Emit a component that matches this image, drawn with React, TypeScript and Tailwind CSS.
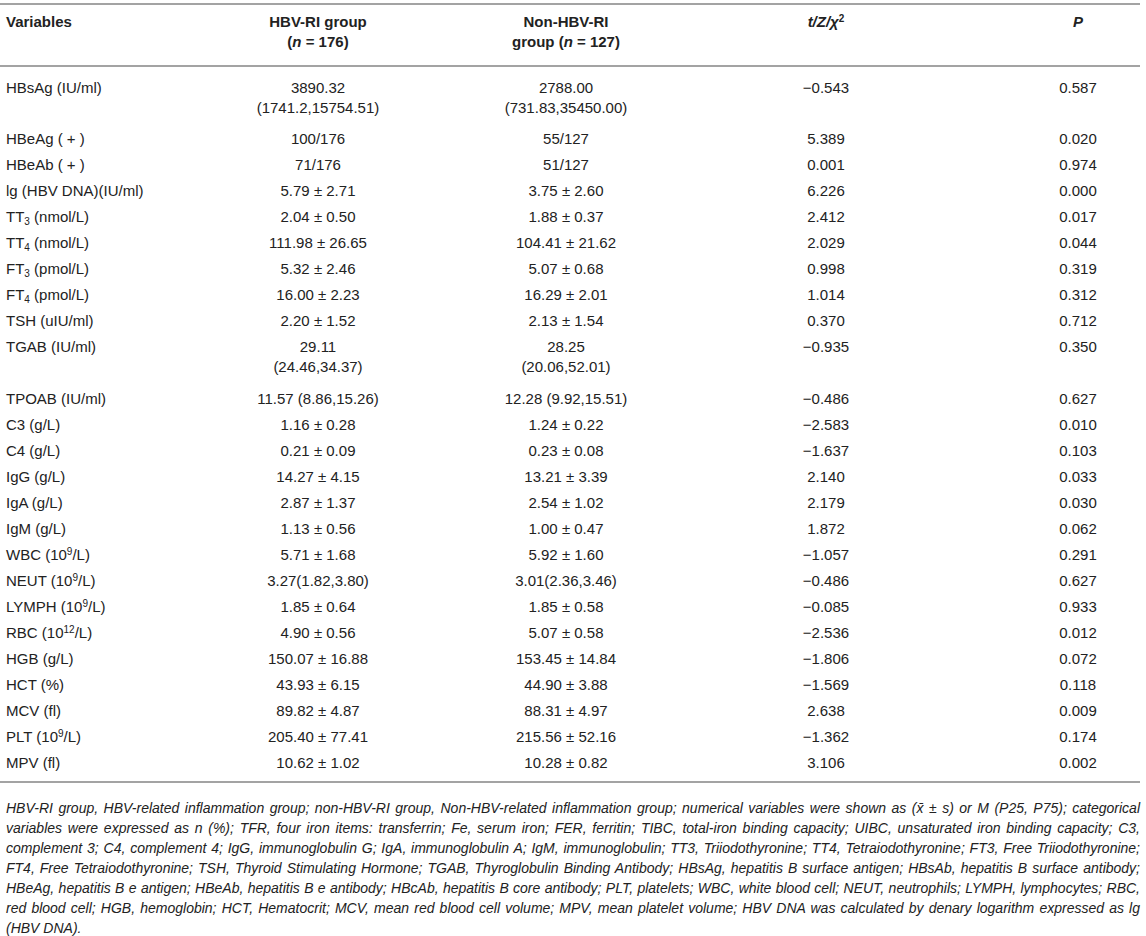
import React from 'react';

type Row = {
  label: React.ReactNode;
  hbv: React.ReactNode;
  non: React.ReactNode;
  stat: string;
  p: string;
  pad?: string;
};

const pm = (a: string, b: string) => `${a} ± ${b}`;

const rows: Row[] = [
  {
    label: 'HBsAg (IU/ml)',
    hbv: <>3890.32<br />(1741.2,15754.51)</>,
    non: <>2788.00<br />(731.83,35450.00)</>,
    stat: '−0.543',
    p: '0.587',
    pad: 'pt-[11px] pb-[8px]'
  },
  { label: 'HBeAg ( + )', hbv: '100/176', non: '55/127', stat: '5.389', p: '0.020' },
  { label: 'HBeAb ( + )', hbv: '71/176', non: '51/127', stat: '0.001', p: '0.974' },
  { label: 'lg (HBV DNA)(IU/ml)', hbv: pm('5.79', '2.71'), non: pm('3.75', '2.60'), stat: '6.226', p: '0.000' },
  { label: <>TT<sub className="text-[10px]">3</sub> (nmol/L)</>, hbv: pm('2.04', '0.50'), non: pm('1.88', '0.37'), stat: '2.412', p: '0.017' },
  { label: <>TT<sub className="text-[10px]">4</sub> (nmol/L)</>, hbv: pm('111.98', '26.65'), non: pm('104.41', '21.62'), stat: '2.029', p: '0.044' },
  { label: <>FT<sub className="text-[10px]">3</sub> (pmol/L)</>, hbv: pm('5.32', '2.46'), non: pm('5.07', '0.68'), stat: '0.998', p: '0.319' },
  { label: <>FT<sub className="text-[10px]">4</sub> (pmol/L)</>, hbv: pm('16.00', '2.23'), non: pm('16.29', '2.01'), stat: '1.014', p: '0.312' },
  { label: 'TSH (uIU/ml)', hbv: pm('2.20', '1.52'), non: pm('2.13', '1.54'), stat: '0.370', p: '0.712' },
  {
    label: 'TGAB (IU/ml)',
    hbv: <>29.11<br />(24.46,34.37)</>,
    non: <>28.25<br />(20.06,52.01)</>,
    stat: '−0.935',
    p: '0.350',
    pad: 'pt-[3px] pb-[9px]'
  },
  { label: 'TPOAB (IU/ml)', hbv: '11.57 (8.86,15.26)', non: '12.28 (9.92,15.51)', stat: '−0.486', p: '0.627' },
  { label: 'C3 (g/L)', hbv: pm('1.16', '0.28'), non: pm('1.24', '0.22'), stat: '−2.583', p: '0.010' },
  { label: 'C4 (g/L)', hbv: pm('0.21', '0.09'), non: pm('0.23', '0.08'), stat: '−1.637', p: '0.103' },
  { label: 'IgG (g/L)', hbv: pm('14.27', '4.15'), non: pm('13.21', '3.39'), stat: '2.140', p: '0.033' },
  { label: 'IgA (g/L)', hbv: pm('2.87', '1.37'), non: pm('2.54', '1.02'), stat: '2.179', p: '0.030' },
  { label: 'IgM (g/L)', hbv: pm('1.13', '0.56'), non: pm('1.00', '0.47'), stat: '1.872', p: '0.062' },
  { label: <>WBC (10<sup className="text-[10px]">9</sup>/L)</>, hbv: pm('5.71', '1.68'), non: pm('5.92', '1.60'), stat: '−1.057', p: '0.291' },
  { label: <>NEUT (10<sup className="text-[10px]">9</sup>/L)</>, hbv: '3.27(1.82,3.80)', non: '3.01(2.36,3.46)', stat: '−0.486', p: '0.627' },
  { label: <>LYMPH (10<sup className="text-[10px]">9</sup>/L)</>, hbv: pm('1.85', '0.64'), non: pm('1.85', '0.58'), stat: '−0.085', p: '0.933' },
  { label: <>RBC (10<sup className="text-[10px]">12</sup>/L)</>, hbv: pm('4.90', '0.56'), non: pm('5.07', '0.58'), stat: '−2.536', p: '0.012' },
  { label: 'HGB (g/L)', hbv: pm('150.07', '16.88'), non: pm('153.45', '14.84'), stat: '−1.806', p: '0.072' },
  { label: 'HCT (%)', hbv: pm('43.93', '6.15'), non: pm('44.90', '3.88'), stat: '−1.569', p: '0.118' },
  { label: 'MCV (fl)', hbv: pm('89.82', '4.87'), non: pm('88.31', '4.97'), stat: '2.638', p: '0.009' },
  { label: <>PLT (10<sup className="text-[10px]">9</sup>/L)</>, hbv: pm('205.40', '77.41'), non: pm('215.56', '52.16'), stat: '−1.362', p: '0.174' },
  { label: 'MPV (fl)', hbv: pm('10.62', '1.02'), non: pm('10.28', '0.82'), stat: '3.106', p: '0.002', pad: 'pt-[3px] pb-[8px]' }
];

const footnote = [
  'HBV-RI group, HBV-related inflammation group; non-HBV-RI group, Non-HBV-related inflammation group; numerical variables were shown as (x̄ ± s) or M (P25, P75); categorical',
  'variables were expressed as n (%); TFR, four iron items: transferrin; Fe, serum iron; FER, ferritin; TIBC, total-iron binding capacity; UIBC, unsaturated iron binding capacity; C3,',
  'complement 3; C4, complement 4; IgG, immunoglobulin G; IgA, immunoglobulin A; IgM, immunoglobulin; TT3, Triiodothyronine; TT4, Tetraiodothyronine; FT3, Free Triiodothyronine;',
  'FT4, Free Tetraiodothyronine; TSH, Thyroid Stimulating Hormone; TGAB, Thyroglobulin Binding Antibody; HBsAg, hepatitis B surface antigen; HBsAb, hepatitis B surface antibody;',
  'HBeAg, hepatitis B e antigen; HBeAb, hepatitis B e antibody; HBcAb, hepatitis B core antibody; PLT, platelets; WBC, white blood cell; NEUT, neutrophils; LYMPH, lymphocytes; RBC,',
  'red blood cell; HGB, hemoglobin; HCT, Hematocrit; MCV, mean red blood cell volume; MPV, mean platelet volume; HBV DNA was calculated by denary logarithm expressed as lg',
  '(HBV DNA).'
];

export default function App() {
  return (
    <div className="w-[1146px] h-[936px] bg-white text-[#222] font-['Liberation_Sans',Arial,sans-serif] overflow-hidden">
      <table className="w-[1140px] table-fixed border-collapse mt-[3px] text-[15px] leading-[20px]">
        <colgroup>
          <col className="w-[140px]" />
          <col className="w-[356px]" />
          <col className="w-[140px]" />
          <col className="w-[380px]" />
          <col className="w-[124px]" />
        </colgroup>
        <thead>
          <tr className="border-t-2 border-b-2 border-[#a3a3a3] font-bold align-top">
            <th className="text-left pl-[6px] pt-[7px] pb-[13px] whitespace-nowrap">Variables</th>
            <th className="text-center pt-[7px] pb-[13px]">
              HBV-RI group<br />(<i>n</i> = 176)
            </th>
            <th className="text-center pt-[7px] pb-[13px] whitespace-nowrap">
              Non-HBV-RI<br />group (<i>n</i> = 127)
            </th>
            <th className="text-center pt-[7px] pb-[13px] italic">
              t/Z/χ<sup className="text-[10px] not-italic">2</sup>
            </th>
            <th className="text-center pt-[7px] pb-[13px] italic">P</th>
          </tr>
        </thead>
        <tbody className="border-b-2 border-[#a3a3a3]">
          {rows.map((r, i) => {
            const pad = r.pad ?? 'py-[3px]';
            return (
              <tr key={i} className="align-top">
                <td className={`pl-[6px] whitespace-nowrap ${pad}`}>{r.label}</td>
                <td className={`text-center whitespace-nowrap ${pad}`}>{r.hbv}</td>
                <td className={`text-center whitespace-nowrap ${pad}`}>{r.non}</td>
                <td className={`text-center ${pad}`}>{r.stat}</td>
                <td className={`text-center ${pad}`}>{r.p}</td>
              </tr>
            );
          })}
        </tbody>
      </table>

      {/* Footnote */}
      <div className="w-[1140px] pl-[6px] mt-[15px] text-[14px] leading-[20px] italic">
        {footnote.map((line, i) => (
          <div
            key={i}
            className={i < footnote.length - 1 ? 'text-justify [text-align-last:justify]' : ''}
          >
            {line}
          </div>
        ))}
      </div>
    </div>
  );
}
